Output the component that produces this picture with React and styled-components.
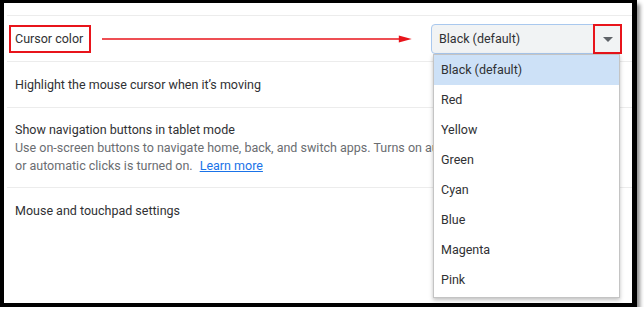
import React from "react";
import styled, { createGlobalStyle } from "styled-components";

const GlobalStyle = createGlobalStyle`
  html, body { margin: 0; padding: 0; background: #fff; }
  body { font-family: Roboto, "Noto Sans", Arial, sans-serif; }
`;

const Frame = styled.div`
  box-sizing: border-box;
  width: 637px;
  height: 307px;
  border-style: solid;
  border-color: #000;
  border-width: 3px 5px 4px 4px;
  box-shadow: 3px 4px 4px rgba(0, 0, 0, 0.45);
  background: #fff;
`;

const Inner = styled.div`
  padding: 12px 0 0 3px;
  display: flex;
  flex-direction: column;
`;

const Row = styled.div`
  display: flex;
  align-items: center;
  border-top: 1px solid #ececec;
  min-height: ${(p) => p.$h || 45}px;
  padding: ${(p) => (p.$tall ? "12px 0 12px 8px" : "0 0 0 8px")};
  box-sizing: border-box;
  font-size: 12.5px;
  color: #303134;
  line-height: 18px;
`;

const RowText = styled.div`
  display: flex;
  flex-direction: column;
  max-width: 418px;
  overflow: hidden;
`;

const Title = styled.div`
  color: #303134;
  white-space: nowrap;
`;

const Sub = styled.div`
  color: #6a6d71;
  white-space: nowrap;
`;

const Link = styled.a`
  color: #1a73e8;
  text-decoration: underline;
  margin-left: 7px;
`;

const LabelBox = styled.div`
  margin-left: -6px;
  border: 2px solid #e8141b;
  padding: 3px 6px 3px 4px;
  line-height: 18px;
  height: 28px;
  box-sizing: border-box;
  display: flex;
  align-items: center;
  white-space: nowrap;
`;

const ArrowWrap = styled.div`
  flex: 1;
  margin: 0 19px 0 11px;
  height: 10px;
  display: flex;
  align-items: center;
`;

const SelectWrap = styled.div`
  position: relative;
  width: 191px;
  margin-right: 10px;
`;

const SelectBox = styled.div`
  box-sizing: border-box;
  height: 30px;
  border: 1px solid #a9c8ee;
  border-radius: 4px;
  background: #f1f3f4;
  display: flex;
  align-items: center;
  padding-left: 7px;
  color: #303134;
  font-size: 12.5px;
`;

const Caret = styled.div`
  position: absolute;
  right: 9px;
  top: 13px;
  width: 0;
  height: 0;
  border-left: 5px solid transparent;
  border-right: 5px solid transparent;
  border-top: 5px solid #5f6368;
`;

const CaretMark = styled.div`
  position: absolute;
  right: 0;
  top: 0;
  width: 29px;
  height: 30px;
  box-sizing: border-box;
  border: 2px solid #e8141b;
`;

const Menu = styled.div`
  position: absolute;
  top: 30px;
  left: 2px;
  width: 187px;
  box-sizing: border-box;
  background: #fff;
  border: 1px solid #c4c4c4;
  box-shadow: 0 2px 4px rgba(0, 0, 0, 0.25);
  padding: 0 0 2px;
  z-index: 2;
`;

const Item = styled.div`
  height: 30px;
  display: flex;
  align-items: center;
  padding-left: 7px;
  font-size: 12.5px;
  color: #303134;
  background: ${(p) => (p.$active ? "#cde1f7" : "transparent")};
`;

const colors = ["Black (default)", "Red", "Yellow", "Green", "Cyan", "Blue", "Magenta", "Pink"];

export default function App() {
  return (
    <>
      <GlobalStyle />
      <Frame>
        <Inner>
          <Row $h={46}>
            <LabelBox>Cursor color</LabelBox>
            <ArrowWrap>
              <svg width="100%" height="10" viewBox="0 0 311 10" preserveAspectRatio="none">
                <line x1="0" y1="5" x2="300" y2="5" stroke="#e8141b" strokeWidth="1.5" />
                <polygon points="298,1.5 311,5 298,8.5" fill="#e8141b" />
              </svg>
            </ArrowWrap>
            <SelectWrap>
              <SelectBox>Black (default)</SelectBox>
              <Caret />
              <CaretMark />
              <Menu>
                {colors.map((c, i) => (
                  <Item key={c} $active={i === 0}>
                    {c}
                  </Item>
                ))}
              </Menu>
            </SelectWrap>
          </Row>
          <Row $h={46}>
            <Title>Highlight the mouse cursor when it’s moving</Title>
          </Row>
          <Row $tall $h={80}>
            <RowText>
              <Title>Show navigation buttons in tablet mode</Title>
              <Sub>Use on-screen buttons to navigate home, back, and switch apps. Turns on automatically when ChromeVox</Sub>
              <Sub>
                or automatic clicks is turned on.
                <Link href="#">Learn more</Link>
              </Sub>
            </RowText>
          </Row>
          <Row $h={46}>
            <Title>Mouse and touchpad settings</Title>
          </Row>
        </Inner>
      </Frame>
    </>
  );
}
